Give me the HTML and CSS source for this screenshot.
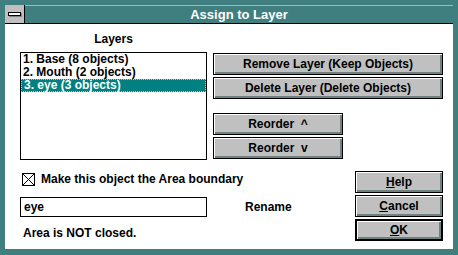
FILE: index.html
```html
<!DOCTYPE html>
<html>
<head>
<meta charset="utf-8">
<link rel="stylesheet" href="styles.css">
</head>
<body>
<div class="frame">
  <div class="win">
    <div class="titlebar">
      <div class="sysmenu"><span class="sysbar"></span></div>
      <div class="title">Assign to Layer</div>
    </div>
    <div class="client">
      <div class="top">
        <div class="left">
          <div class="label">Layers</div>
          <div class="listbox">
            <div class="item">1. Base (8 objects)</div>
            <div class="item">2. Mouth (2 objects)</div>
            <div class="item sel"><span class="focus">3. eye (3 objects)</span></div>
          </div>
        </div>
        <div class="right">
          <div class="btn wide">Remove Layer (Keep Objects)</div>
          <div class="btn wide">Delete Layer (Delete Objects)</div>
          <div class="btn mid first">Reorder&nbsp;&nbsp;^</div>
          <div class="btn mid">Reorder&nbsp;&nbsp;v</div>
        </div>
      </div>
      <div class="bottom">
        <div class="bleft">
          <div class="checkrow">
            <span class="check">
              <svg width="13" height="13" viewBox="0 0 13 13"><rect x="0.5" y="0.5" width="12" height="12" fill="#fff" stroke="#000"/><path d="M1 1L12 12M12 1L1 12" stroke="#000" stroke-width="1"/></svg>
            </span>
            <span class="checklabel">Make this object the Area boundary</span>
          </div>
          <div class="editrow">
            <div class="edit">eye</div>
            <span class="rename">Rename</span>
          </div>
          <div class="status">Area is NOT closed.</div>
        </div>
        <div class="bright">
          <div class="btn small"><u>H</u>elp</div>
          <div class="btn small"><u>C</u>ancel</div>
          <div class="btn small default"><u>O</u>K</div>
        </div>
      </div>
    </div>
  </div>
</div>
</body>
</html>
```
FILE: styles.css
```css
* { box-sizing: border-box; }
html, body { margin: 0; padding: 0; }
body {
  width: 458px;
  height: 255px;
  overflow: hidden;
  font-family: "Liberation Sans", Arial, sans-serif;
  font-weight: bold;
  font-size: 12px;
  color: #000;
}
.frame {
  width: 458px;
  height: 255px;
  background: #3f7f7f;
  padding: 5px 5px 6px 5px;
}
.win {
  width: 448px;
  height: 244px;
  background: #fff;
  display: flex;
  flex-direction: column;
}
.titlebar {
  height: 19px;
  display: flex;
  background: #3f7f7f;
  border-bottom: 1px solid #000;
  border-top: 1px solid #8fbfbf;
}
.sysmenu {
  width: 20px;
  height: 18px;
  margin-top: -1px;
  background: #c0c0c0;
  border-right: 1px solid #000;
  display: flex;
  align-items: center;
  justify-content: center;
}
.sysbar {
  width: 13px;
  height: 4px;
  background: #fff;
  border: 1px solid #000;
  box-shadow: 1px 1px 0 #808080;
}
.title {
  flex: 1;
  color: #fff;
  font-size: 13px;
  text-align: center;
  line-height: 17px;
}
.client {
  flex: 1;
  padding-left: 15px;
  display: flex;
  flex-direction: column;
}
.top {
  display: flex;
  gap: 6px;
  height: 136px;
}
.left {
  width: 187px;
  display: flex;
  flex-direction: column;
}
.label {
  height: 28px;
  text-align: center;
  line-height: 14px;
  padding-top: 8px;
}
.listbox {
  height: 108px;
  border: 1px solid #000;
  background: #fff;
}
.item {
  height: 13px;
  line-height: 13px;
  padding-left: 2px;
  white-space: nowrap;
}
.item.sel {
  background: #008080;
  color: #fff;
  padding-left: 0;
}
.focus {
  display: block;
  height: 13px;
  line-height: 11px;
  padding-left: 2px;
  border: 1px dotted #c0c0c0;
}
.right {
  width: 230px;
  padding-top: 29px;
  display: flex;
  flex-direction: column;
  gap: 2px;
}
.btn {
  height: 22px;
  background: #c0c0c0;
  border: 1px solid #000;
  box-shadow: inset 1px 1px 0 #fff, inset -2px -2px 0 #6f8080;
  display: flex;
  align-items: center;
  justify-content: center;
  line-height: 14px;
  padding-bottom: 1px;
  white-space: nowrap;
}
.btn.wide { width: 230px; }
.btn.mid { width: 130px; }
.btn.mid.first { margin-top: 12px; }
.btn.small { width: 88px; }
.btn.default {
  border: 2px solid #000;
}
.bottom {
  display: flex;
  margin-top: 11px;
}
.bleft {
  width: 335px;
  display: flex;
  flex-direction: column;
}
.checkrow {
  display: flex;
  align-items: center;
  height: 13px;
  margin-top: 2px;
  padding-left: 2px;
}
.check { width: 13px; height: 13px; display: block; }
.check svg { display: block; }
.checklabel { margin-left: 6px; line-height: 13px; }
.editrow {
  display: flex;
  align-items: center;
  margin-top: 11px;
  height: 20px;
}
.edit {
  width: 187px;
  height: 20px;
  border: 1px solid #000;
  padding-left: 3px;
  line-height: 18px;
}
.rename { margin-left: 38px; }
.status {
  margin-top: 9px;
  padding-left: 3px;
  line-height: 14px;
}
.bright {
  display: flex;
  flex-direction: column;
  gap: 2px;
}
```
